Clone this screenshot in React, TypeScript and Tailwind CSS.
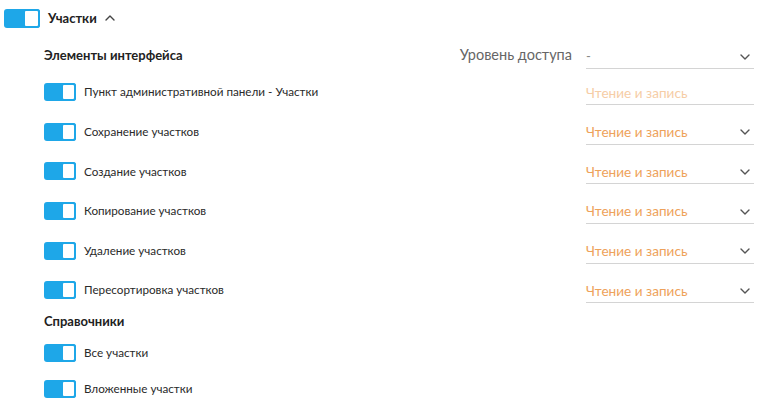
const rows = [
  { label: "Пункт административной панели - Участки", disabled: true },
  { label: "Сохранение участков" },
  { label: "Создание участков" },
  { label: "Копирование участков" },
  { label: "Удаление участков" },
  { label: "Пересортировка участков" },
];

function Toggle({ big = false }: { big?: boolean }) {
  return (
    <div
      className={`flex shrink-0 rounded-[3px] bg-[#1ea7e8] ${big ? "h-[19px] w-[36px]" : "h-[18px] w-[32px]"}`}
    >
      <div className="flex-1" />
      <div
        className={`rounded-[3px] border-2 border-[#1ea7e8] bg-white ${big ? "w-[17px]" : "w-[15px]"}`}
      />
    </div>
  );
}

function Chevron({ up = false, color = "#555" }: { up?: boolean; color?: string }) {
  return (
    <svg width="10" height="6" viewBox="0 0 10 6" fill="none">
      <path
        d={up ? "M1 5 L5 1 L9 5" : "M1 1 L5 5 L9 1"}
        stroke={color}
        strokeWidth="1.4"
        strokeLinecap="round"
        strokeLinejoin="round"
      />
    </svg>
  );
}

function Select({ value, disabled }: { value: string; disabled?: boolean }) {
  return (
    <div className="flex h-[24px] w-[168px] items-center justify-between border-b border-[#d4d4d4] pr-[4px]">
      <span className={`text-[13.6px] ${disabled ? "text-[#f6cda6]" : "text-[#eea25a]"}`}>{value}</span>
      {!disabled && <Chevron />}
    </div>
  );
}

export default function App() {
  return (
    <div className="h-[404px] w-[784px] overflow-hidden bg-white font-['Lato',sans-serif] text-[#222]">
      <div className="flex items-center pl-[4px] pt-[9px]">
        <Toggle big />
        <span className="ml-[8px] text-[13px] font-bold">Участки</span>
        <span className="ml-[8px] mb-[2px]">
          <Chevron up color="#444" />
        </span>
      </div>

      <div className="pl-[44px] pr-[30px]">
        <div className="mt-[15px] flex items-end">
          <span className="flex-1 pb-[4px] text-[13px] font-bold">Элементы интерфейса</span>
          <span className="mr-[14px] pb-[4px] text-[14.5px] text-[#666]">Уровень доступа</span>
          <div className="flex h-[24px] w-[168px] items-center justify-between border-b border-[#d4d4d4] pr-[4px]">
            <span className="text-[13px] text-[#888]">-</span>
            <Chevron />
          </div>
        </div>

        <div className="mt-[12px] flex flex-col gap-[15.6px]">
          {rows.map((r) => (
            <div key={r.label} className="flex items-center">
              <div className="flex flex-1 items-center gap-[8px] pb-[2px]">
                <Toggle />
                <span className="text-[11.7px] text-[#2a2a2a]">{r.label}</span>
              </div>
              <Select value="Чтение и запись" disabled={r.disabled} />
            </div>
          ))}
        </div>

        <div className="mt-[9px] text-[13px] font-bold">Справочники</div>
        <div className="mt-[12px] flex flex-col gap-[18px]">
          {["Все участки", "Вложенные участки"].map((l) => (
            <div key={l} className="flex items-center gap-[8px]">
              <Toggle />
              <span className="text-[11.7px] text-[#2a2a2a]">{l}</span>
            </div>
          ))}
        </div>
      </div>
    </div>
  );
}
